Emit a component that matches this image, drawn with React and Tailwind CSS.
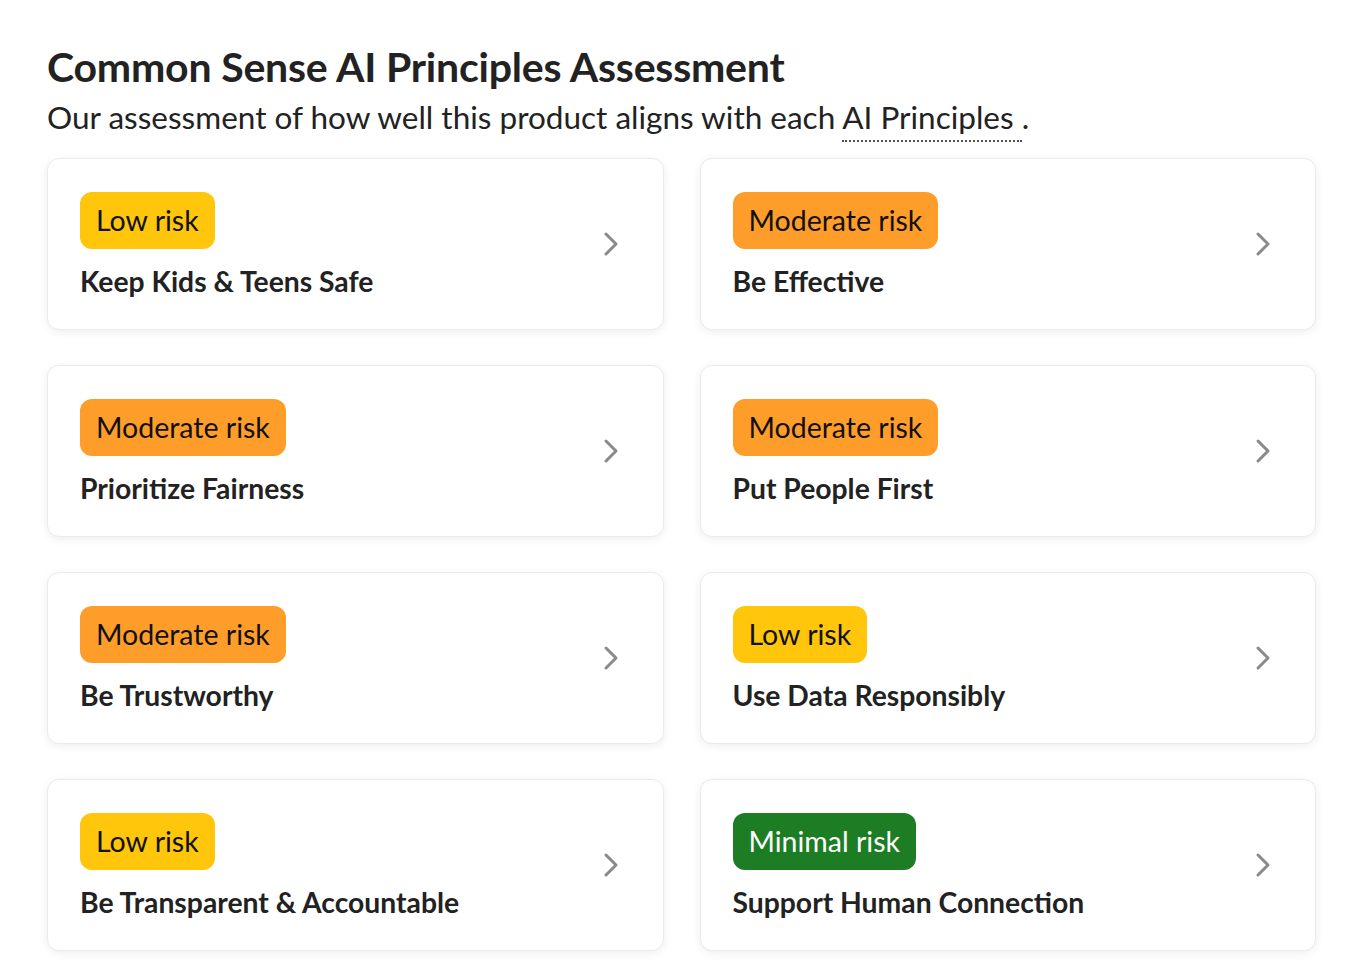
import { ChevronRight } from 'lucide-react'

const principles = [
  { risk: 'Low risk', title: 'Keep Kids & Teens Safe' },
  { risk: 'Moderate risk', title: 'Be Effective' },
  { risk: 'Moderate risk', title: 'Prioritize Fairness' },
  { risk: 'Moderate risk', title: 'Put People First' },
  { risk: 'Moderate risk', title: 'Be Trustworthy' },
  { risk: 'Low risk', title: 'Use Data Responsibly' },
  { risk: 'Low risk', title: 'Be Transparent & Accountable' },
  { risk: 'Minimal risk', title: 'Support Human Connection' },
]

const badgeColors = {
  'Low risk': 'bg-[#ffc60b] text-[#111]',
  'Moderate risk': 'bg-[#ff9d2a] text-[#111]',
  'Minimal risk': 'bg-[#1c7d24] text-white',
}

export default function App() {
  return (
    <div className="min-h-screen bg-white px-[47px] pt-[42px] text-[#222]" style={{ fontFamily: 'Lato, "Noto Sans", sans-serif' }}>
      <h1 className="text-[41px] font-bold leading-[50px] tracking-[-0.2px]">Common Sense AI Principles Assessment</h1>
      <p className="mt-[5px] text-[31.5px] leading-[40px]">
        Our assessment of how well this product aligns with each{' '}
        <span className="border-b-2 border-dotted border-[#555] pb-[4px]">AI Principles </span>.
      </p>

      <div className="mt-[21px] grid w-[1269px] grid-cols-2 gap-x-[36px] gap-y-[35px]">
        {principles.map(p => (
          <div key={p.title}
            className="flex h-[172px] items-center justify-between rounded-[12px] border border-[#ebebeb] bg-white pl-[32px] pr-[32px] shadow-[0_2px_10px_rgba(0,0,0,0.07)]">
            <div className="flex flex-col items-start">
              <span className={`rounded-[12px] px-[16px] py-[9px] text-[28.5px] leading-[39px] ${badgeColors[p.risk]}`}>
                {p.risk}
              </span>
              <span className="mt-[16px] text-[28.3px] font-bold leading-[32px]">{p.title}</span>
            </div>
            <ChevronRight className="h-[40px] w-[40px] text-[#8a8a8a]" strokeWidth={1.8} />
          </div>
        ))}
      </div>
    </div>
  )
}
